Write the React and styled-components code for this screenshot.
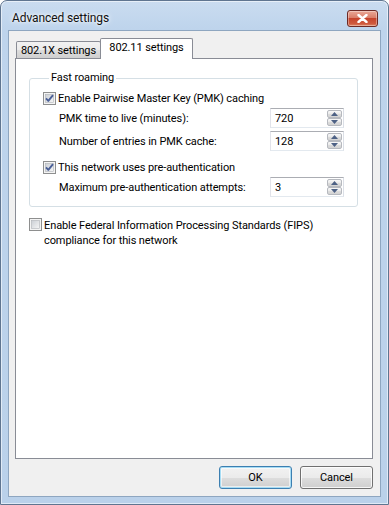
import { useId } from "react";
import styled, { createGlobalStyle } from "styled-components";

const GlobalStyle = createGlobalStyle`
  html, body {
    margin: 0;
    padding: 0;
  }
  body {
    width: 389px;
    height: 505px;
    overflow: hidden;
    background: #fff;
    font-family: Roboto, "Noto Sans", sans-serif;
    font-size: 11px;
    letter-spacing: -0.1px;
    color: #000;
  }
`;

const Window = styled.div`
  box-sizing: border-box;
  width: 389px;
  height: 505px;
  border: 1px solid #5f7590;
  border-radius: 7px 7px 0 0;
  background: linear-gradient(to bottom, #cadcf0 0, #bed4ec 28px, #bad1ea 100%);
  box-shadow: inset 0 0 0 1px rgba(255, 255, 255, 0.55);
  padding: 0 7px 7px;
  display: flex;
  flex-direction: column;
`;

const TitleBar = styled.div`
  height: 29px;
  display: flex;
  align-items: center;
  justify-content: space-between;
`;

const TitleText = styled.div`
  padding-left: 4px;
  margin-top: 4px;
  font-size: 12px;
  color: #111;
  text-shadow: 0 0 6px #fff, 0 0 3px #fff;
`;

const CloseButton = styled.div`
  box-sizing: border-box;
  width: 31px;
  height: 17px;
  margin-right: 3px;
  margin-top: 5px;
  border: 1px solid #6d2a25;
  border-radius: 3px;
  background: linear-gradient(to bottom, #eaa897 0, #da7e69 45%, #c6442c 50%, #cf5a3e 85%, #e08a6a 100%);
  box-shadow: inset 0 0 0 1px rgba(255, 255, 255, 0.35);
  display: flex;
  align-items: center;
  justify-content: center;
`;

const Client = styled.div`
  flex: 1;
  display: flex;
  flex-direction: column;
  background: #f0f0f0;
  border: 1px solid #8ea6c0;
  padding: 7px 7px 7px 6px;
  min-height: 0;
`;

const TabStrip = styled.div`
  height: 20px;
  display: flex;
  align-items: flex-end;
  padding-left: 1px;
`;

const Tab = styled.div`
  box-sizing: border-box;
  position: relative;
  width: ${(p) => (p.$active ? "93px" : "85px")};
  height: ${(p) => (p.$active ? "21px" : "17px")};
  margin-left: ${(p) => (p.$active ? "-1px" : "0")};
  margin-bottom: ${(p) => (p.$active ? "-1px" : "0")};
  z-index: ${(p) => (p.$active ? 2 : 1)};
  border: 1px solid #898c95;
  border-bottom: none;
  border-radius: 2px 2px 0 0;
  background: ${(p) =>
    p.$active
      ? "#fff"
      : "linear-gradient(to bottom, #f2f2f2 0, #ebebeb 50%, #dddddd 51%, #cfcfcf 100%)"};
  display: flex;
  align-items: center;
  justify-content: center;
  padding-bottom: ${(p) => (p.$active ? "3px" : "0")};
  white-space: nowrap;
`;

const Panel = styled.div`
  flex: 1;
  position: relative;
  z-index: 1;
  background: #fff;
  border: 1px solid #898c95;
  padding: 11px 14px 0 13px;
`;

const GroupBox = styled.fieldset`
  margin: 0;
  padding: 4px 13px 9px;
  border: 1px solid #d5dfe5;
  border-radius: 3px;
  display: flex;
  flex-direction: column;
  min-width: 0;
`;

const Legend = styled.legend`
  padding: 0 2px;
  margin-left: 6px;
  line-height: 16px;
`;

const CheckRow = styled.label`
  display: flex;
  align-items: ${(p) => (p.$multi ? "flex-start" : "center")};
  gap: 2px;
  min-height: 16px;
  line-height: 15px;
  margin-top: ${(p) => p.$top || 0}px;
  white-space: nowrap;
`;

const CheckText = styled.span``;

const SpinRow = styled.div`
  display: flex;
  align-items: center;
  justify-content: space-between;
  height: 20px;
  padding-left: 16px;
  margin-top: ${(p) => p.$top || 0}px;
  white-space: nowrap;
`;

const SpinBox = styled.div`
  box-sizing: border-box;
  width: 74px;
  height: 20px;
  border: 1px solid #abadb3;
  border-color: #abadb3 #dbdfe6 #e3e9ef #e2e3ea;
  background: #fff;
  display: flex;
  align-items: stretch;
`;

const SpinValue = styled.div`
  flex: 1;
  display: flex;
  align-items: center;
  padding-left: 4px;
`;

const SpinButtons = styled.div`
  width: 15px;
  margin: 1px 1px 1px 0;
  display: flex;
  flex-direction: column;
`;

const SpinArrow = styled.div`
  box-sizing: border-box;
  flex: 1;
  border: 1px solid #b6b9bf;
  border-radius: 2px;
  background: linear-gradient(to bottom, #f8f8f8 0, #e9e9e9 50%, #dcdcdc 51%, #d3d3d3 100%);
  display: flex;
  align-items: center;
  justify-content: center;
`;

const ButtonRow = styled.div`
  display: flex;
  justify-content: flex-end;
  gap: 8px;
  margin-top: 7px;
`;

const Button = styled.div`
  box-sizing: border-box;
  width: 73px;
  height: 23px;
  border: 1px solid ${(p) => (p.$default ? "#3c7fb1" : "#707070")};
  border-radius: 3px;
  background: linear-gradient(to bottom, #f2f2f2 0, #ebebeb 50%, #dddddd 51%, #cfcfcf 100%);
  box-shadow: ${(p) =>
    p.$default
      ? "inset 0 0 0 1px #a6dcf4, inset 0 0 0 2px rgba(255,255,255,0.6)"
      : "inset 0 0 0 1px rgba(255,255,255,0.8)"};
  display: flex;
  align-items: center;
  justify-content: center;
`;

function CheckBox({ checked }) {
  const id = useId().replace(/:/g, "");
  return (
    <svg width="13" height="13" viewBox="0 0 13 13" style={{ flex: "none" }}>
      <defs>
        <linearGradient id={`cb${id}`} x1="0" y1="0" x2="1" y2="1">
          <stop offset="0" stopColor="#cbcfd5" />
          <stop offset="1" stopColor="#f6f6f6" />
        </linearGradient>
      </defs>
      <rect x="0.5" y="0.5" width="12" height="12" fill="#f4f4f4" stroke="#8e8f8f" />
      <rect x="2.5" y="2.5" width="8" height="8" fill={`url(#cb${id})`} stroke="#b0b3b8" strokeWidth="0.6" />
      {checked && (
        <path
          d="M3 6.4 L5.3 8.9 L10 3.2"
          fill="none"
          stroke="#4a5f97"
          strokeWidth="1.9"
          strokeLinejoin="round"
        />
      )}
    </svg>
  );
}

function Spin({ value }) {
  return (
    <SpinBox>
      <SpinValue>{value}</SpinValue>
      <SpinButtons>
        <SpinArrow>
          <svg width="7" height="4" viewBox="0 0 7 4">
            <path d="M0 4 L3.5 0 L7 4 Z" fill="#4d6185" />
          </svg>
        </SpinArrow>
        <SpinArrow>
          <svg width="7" height="4" viewBox="0 0 7 4">
            <path d="M0 0 L3.5 4 L7 0 Z" fill="#4d6185" />
          </svg>
        </SpinArrow>
      </SpinButtons>
    </SpinBox>
  );
}

export default function App() {
  return (
    <>
      <GlobalStyle />
      <Window>
        <TitleBar>
          <TitleText>Advanced settings</TitleText>
          <CloseButton>
            <svg width="11" height="9" viewBox="0 0 11 9">
              <path
                d="M1.5 1 L9.5 8 M9.5 1 L1.5 8"
                stroke="#fff"
                strokeWidth="2.4"
                strokeLinecap="round"
              />
            </svg>
          </CloseButton>
        </TitleBar>
        <Client>
          <TabStrip>
            <Tab>802.1X settings</Tab>
            <Tab $active>802.11 settings</Tab>
          </TabStrip>
          <Panel>
            <GroupBox>
              <Legend>Fast roaming</Legend>
              <CheckRow>
                <CheckBox checked />
                <CheckText>Enable Pairwise Master Key (PMK) caching</CheckText>
              </CheckRow>
              <SpinRow $top={2}>
                <span>PMK time to live (minutes):</span>
                <Spin value="720" />
              </SpinRow>
              <SpinRow $top={3}>
                <span>Number of entries in PMK cache:</span>
                <Spin value="128" />
              </SpinRow>
              <CheckRow $top={8}>
                <CheckBox checked />
                <CheckText>This network uses pre-authentication</CheckText>
              </CheckRow>
              <SpinRow $top={2}>
                <span>Maximum pre-authentication attempts:</span>
                <Spin value="3" />
              </SpinRow>
            </GroupBox>
            <CheckRow $multi $top={11}>
              <CheckBox />
              <CheckText>
                Enable Federal Information Processing Standards (FIPS)
                <br />
                compliance for this network
              </CheckText>
            </CheckRow>
          </Panel>
          <ButtonRow>
            <Button $default>OK</Button>
            <Button>Cancel</Button>
          </ButtonRow>
        </Client>
      </Window>
    </>
  );
}
